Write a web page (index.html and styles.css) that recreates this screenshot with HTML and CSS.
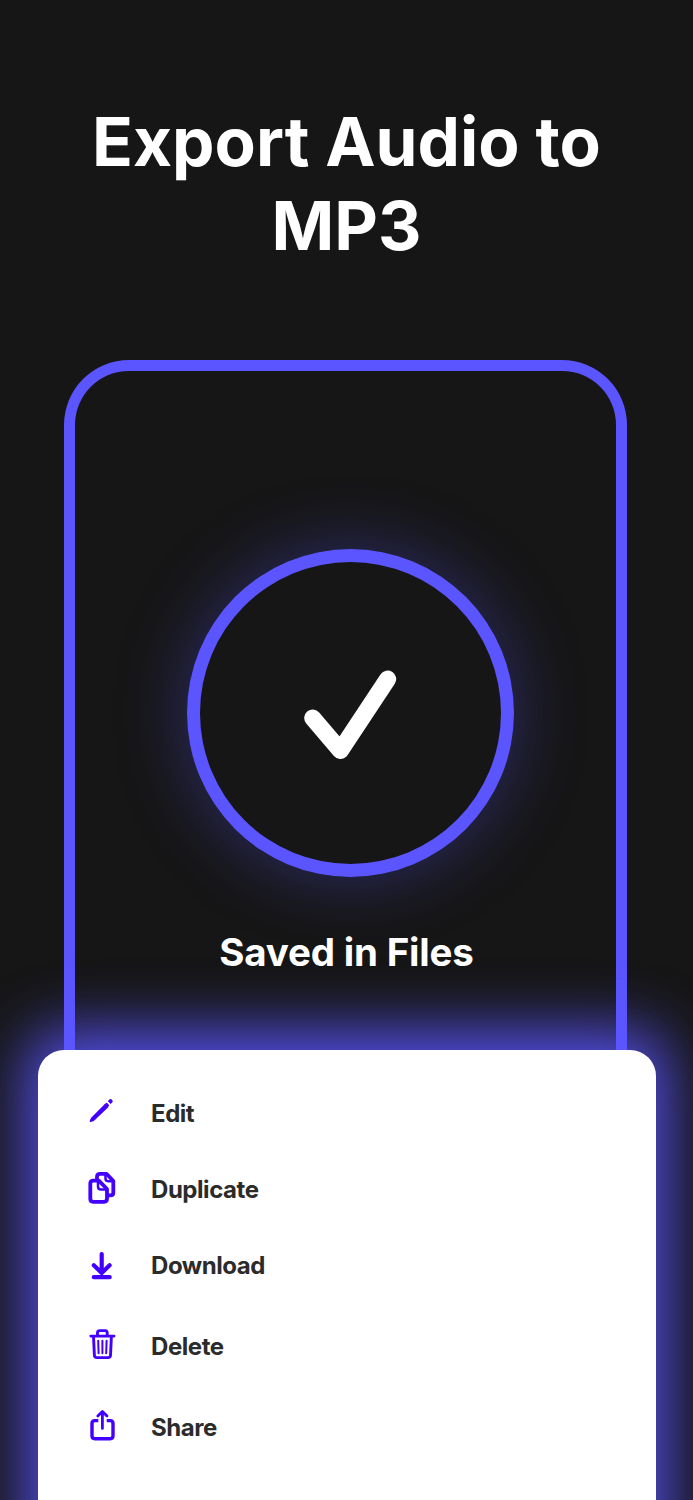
FILE: index.html
```html
<!DOCTYPE html>
<html lang="en">
<head>
<meta charset="utf-8">
<title>Export Audio to MP3</title>
<link rel="stylesheet" href="styles.css">
</head>
<body>
<main class="screen">
  <h1 class="title">Export Audio to<br>MP3</h1>
  <section class="phone">
    <div class="badge">
      <svg class="check" viewBox="0 0 100 100"><path d="M11.7 55 39.4 87.5 86.7 16"/></svg>
    </div>
    <p class="status">Saved in Files</p>
  </section>
  <ul class="menu">
    <li class="item">
      <svg class="icon" viewBox="0 0 40 40"><path class="solid" d="M7.8 28.9Q7.6 26.6 9.4 24.4L22.9 10.9 26.3 14.2 12.6 27.3Q10.4 29.2 7.8 28.9Z"/><path class="solid" d="M22.4 11.4 24 9.9Q24.6 9.6 25.2 10.1L27 11.9Q27.3 12.5 26.9 13.1L25.5 14.6ZM25.8 8.2 27.6 6.3Q28.4 5.6 29.3 6.3L30.5 7.5Q31.1 8.3 30.4 9.2L28.6 11Z"/></svg>
      <span>Edit</span>
    </li>
    <li class="item">
      <svg class="icon" viewBox="0 0 40 40"><path class="line" stroke-width="3.8" d="M15 10.5V8Q15 4.8 18 4.8H24.5L31.3 12V23.4Q31.3 26.4 28.3 26.4H26"/><path class="line" stroke-width="2.5" d="M23.5 5V9.6Q23.5 12.2 26.1 12.2H31M16 12V17.5Q16 20.6 19.1 20.6H24.6"/><path class="line" stroke-width="3.8" d="M11.3 11.6H16.8L25 20V29.8Q25 32.8 22 32.8H11.3Q8.3 32.8 8.3 29.8V14.6Q8.3 11.6 11.3 11.6Z"/></svg>
      <span>Duplicate</span>
    </li>
    <li class="item">
      <svg class="icon" viewBox="0 0 40 40"><path class="line" stroke-width="4.2" d="M19.7 9V27.5M11.8 20.2 19.7 28 27.6 20.2M11.8 32.2H27.7"/></svg>
      <span>Download</span>
    </li>
    <li class="item">
      <svg class="icon" viewBox="0 0 40 40"><path class="line" stroke-width="2.9" d="M8.8 10.1H32M15.5 9.5V6.7Q15.5 4.6 17.6 4.6H23.1Q25.2 4.6 25.2 6.7V9.5M11.5 10.5 12.4 29.2Q12.5 31.6 14.9 31.6H26Q28.4 31.6 28.5 29.2L29.4 10.5"/><path class="line" stroke-width="2" d="M16.2 14.8 16.6 27.3M20.4 14.8V27.3M24.6 14.8 24.2 27.3"/></svg>
      <span>Delete</span>
    </li>
    <li class="item">
      <svg class="icon" viewBox="0 0 40 40"><path class="line butt" stroke-width="3.4" d="M16.3 13.6H12.9Q10 13.6 10 16.5V28.8Q10 31.7 12.9 31.7H28.1Q31 31.7 31 28.8V16.5Q31 13.6 28.1 13.6H24.7"/><path class="line" stroke-width="2.8" d="M20.4 4.6V21.4M15.8 9.1 20.4 4.5 25 9.1"/></svg>
      <span>Share</span>
    </li>
  </ul>
</main>
</body>
</html>
```
FILE: styles.css
```css
* { box-sizing: border-box; }

body {
  margin: 0;
  background: #161616;
  font-family: Inter, "Liberation Sans", sans-serif;
}

.screen {
  display: flex;
  flex-direction: column;
  width: 693px;
  height: 1500px;
  overflow: hidden;
  padding-top: 100px;
  background: #161616;
}

.title {
  flex: none;
  margin: 0;
  height: 260px;
  color: #fff;
  font-size: 67.4px;
  font-weight: 700;
  line-height: 83.5px;
  text-align: center;
  white-space: nowrap;
}

.phone {
  display: flex;
  flex-direction: column;
  flex: none;
  width: 563px;
  height: 690px;
  margin-left: 64px;
  padding-top: 178px;
  border: 11px solid #5b55ff;
  border-bottom: 0;
  border-radius: 65px 65px 0 0;
}

.badge {
  display: flex;
  align-items: center;
  justify-content: center;
  flex: none;
  width: 327px;
  height: 328px;
  margin-left: 112px;
  border: 13px solid #5b55ff;
  border-radius: 50%;
  box-shadow: 0 0 70px rgba(91, 85, 255, 0.36);
}

.check {
  width: 100px;
  height: 100px;
  fill: none;
  stroke: #fff;
  stroke-width: 17;
  stroke-linecap: round;
  stroke-linejoin: round;
}

.status {
  margin: 51px 0 0 2px;
  color: #fff;
  font-size: 38.5px;
  font-weight: 700;
  letter-spacing: -0.2px;
  line-height: 48px;
  text-align: center;
}

.menu {
  display: grid;
  grid-template-rows: 76px 76px 76px 86px 76px;
  flex: none;
  position: relative;
  width: 618px;
  height: 540px;
  margin: -0.5px 0 0 38px;
  padding: 25.5px 0 0 44px;
  list-style: none;
  border-radius: 26px;
  background: #fff;
  box-shadow: 0 -8px 60px 12px rgba(91, 85, 255, 0.9);
}

.item {
  display: flex;
  align-items: center;
  gap: 29px;
  color: #2b2b2b;
  font-size: 24px;
  font-weight: 700;
  letter-spacing: -0.45px;
  line-height: 30px;
}

.item span { padding-top: 1px; }

.icon {
  flex: none;
  width: 40px;
  height: 40px;
}

.line {
  fill: none;
  stroke: #4300ff;
  stroke-linecap: round;
  stroke-linejoin: round;
}

.butt { stroke-linecap: butt; }

.solid { fill: #4300ff; }
```
